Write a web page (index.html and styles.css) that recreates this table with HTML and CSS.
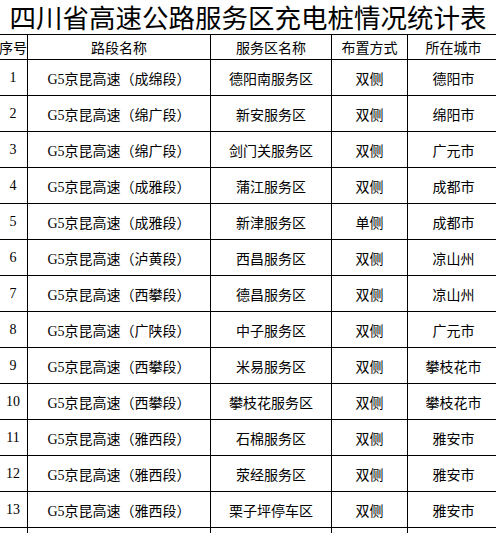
FILE: index.html
```html
<!DOCTYPE html>
<html lang="zh-CN">
<head>
<meta charset="utf-8">
<title>四川省高速公路服务区充电桩情况统计表</title>
<link rel="stylesheet" href="styles.css">
</head>
<body>
<div class="page">
  <h1 class="title">四川省高速公路服务区充电桩情况统计表</h1>
  <table class="stats">
    <colgroup>
      <col class="c-no"><col class="c-road"><col class="c-area"><col class="c-side"><col class="c-city">
    </colgroup>
    <thead>
      <tr class="head"><th>序号</th><th>路段名称</th><th>服务区名称</th><th>布置方式</th><th>所在城市</th></tr>
    </thead>
    <tbody>
      <tr><td>1</td><td>G5京昆高速（成绵段）</td><td>德阳南服务区</td><td>双侧</td><td>德阳市</td></tr>
      <tr><td>2</td><td>G5京昆高速（绵广段）</td><td>新安服务区</td><td>双侧</td><td>绵阳市</td></tr>
      <tr><td>3</td><td>G5京昆高速（绵广段）</td><td>剑门关服务区</td><td>双侧</td><td>广元市</td></tr>
      <tr><td>4</td><td>G5京昆高速（成雅段）</td><td>蒲江服务区</td><td>双侧</td><td>成都市</td></tr>
      <tr><td>5</td><td>G5京昆高速（成雅段）</td><td>新津服务区</td><td>单侧</td><td>成都市</td></tr>
      <tr><td>6</td><td>G5京昆高速（泸黄段）</td><td>西昌服务区</td><td>双侧</td><td>凉山州</td></tr>
      <tr><td>7</td><td>G5京昆高速（西攀段）</td><td>德昌服务区</td><td>双侧</td><td>凉山州</td></tr>
      <tr><td>8</td><td>G5京昆高速（广陕段）</td><td>中子服务区</td><td>双侧</td><td>广元市</td></tr>
      <tr><td>9</td><td>G5京昆高速（西攀段）</td><td>米易服务区</td><td>双侧</td><td>攀枝花市</td></tr>
      <tr><td>10</td><td>G5京昆高速（西攀段）</td><td>攀枝花服务区</td><td>双侧</td><td>攀枝花市</td></tr>
      <tr><td>11</td><td>G5京昆高速（雅西段）</td><td>石棉服务区</td><td>双侧</td><td>雅安市</td></tr>
      <tr><td>12</td><td>G5京昆高速（雅西段）</td><td>荥经服务区</td><td>双侧</td><td>雅安市</td></tr>
      <tr><td>13</td><td>G5京昆高速（雅西段）</td><td>栗子坪停车区</td><td>双侧</td><td>雅安市</td></tr>
      <tr><td></td><td></td><td></td><td></td><td></td></tr>
    </tbody>
  </table>
</div>
</body>
</html>
```
FILE: styles.css
```css
html, body {
  margin: 0;
  padding: 0;
  background: #fff;
}
body {
  width: 496px;
  height: 533px;
  overflow: hidden;
}
.page {
  width: 496px;
}
.title {
  margin: 0;
  height: 34px;
  line-height: 34px;
  font-family: "Noto Sans CJK SC", sans-serif;
  font-weight: normal;
  font-size: 26.5px;
  text-align: center;
  color: #000;
  white-space: nowrap;
  letter-spacing: 0;
}
.stats {
  margin-left: -2px;
  border-collapse: collapse;
  table-layout: fixed;
  width: 501px;
  font-family: "Liberation Serif", "Noto Sans CJK SC", serif;
  font-size: 14px;
  color: #000;
}
.c-no { width: 29px; }
.c-road { width: 183px; }
.c-area { width: 121px; }
.c-side { width: 76px; }
.c-city { width: 92px; }
.stats th, .stats td {
  border: 1px solid #000;
  padding: 0;
  text-align: center;
  vertical-align: middle;
  white-space: nowrap;
  overflow: visible;
  font-weight: normal;
}
.stats .head th {
  height: 24px;
}
.stats td {
  height: 35px;
}
```
